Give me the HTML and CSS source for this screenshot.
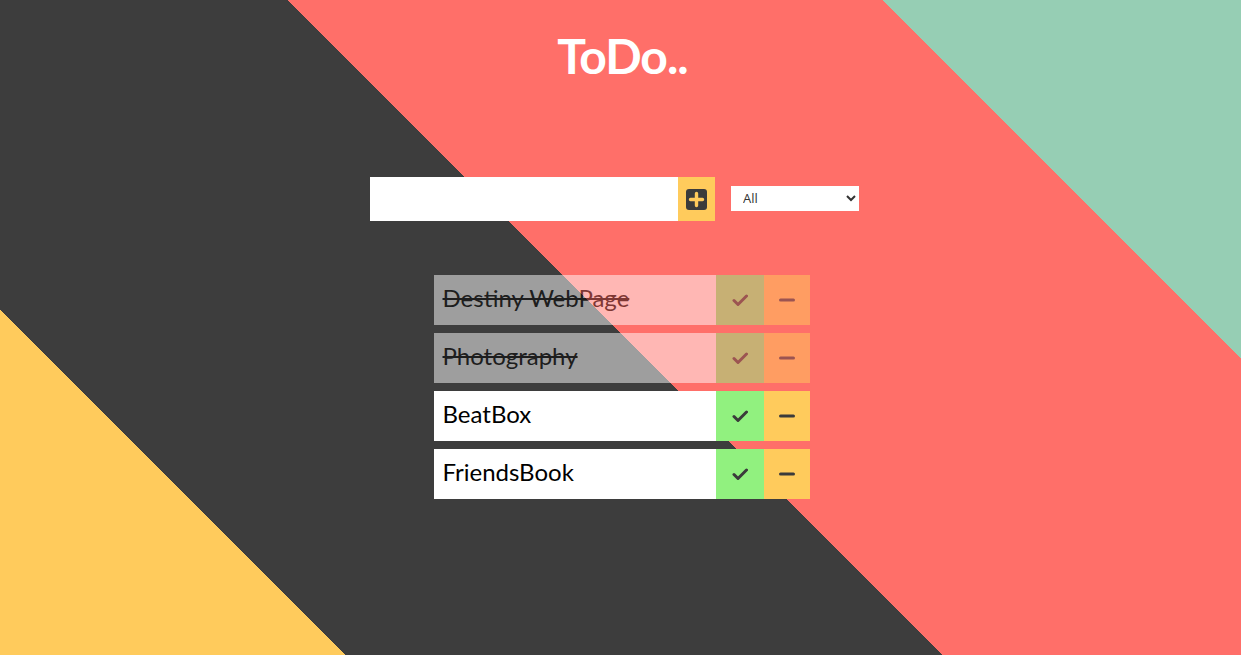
FILE: index.html
```html
<!DOCTYPE html>
<html lang="en">
<head>
<meta charset="utf-8">
<title>ToDo</title>
<link rel="stylesheet" href="styles.css">
</head>
<body>
<div class="page">
  <header class="header">
    <h1 class="title">ToDo..</h1>
  </header>
  <form class="todo-form" onsubmit="return false">
    <input class="todo-input" type="text">
    <button class="add-btn" type="button" aria-label="Add">
      <svg width="21" height="21" viewBox="0 0 21 21"><rect x="0" y="0" width="21" height="21" rx="3" fill="#3b3b3b"/><path d="M10.5 4.5v12M4.5 10.5h12" stroke="#ffcb5c" stroke-width="3.4" stroke-linecap="round"/></svg>
    </button>
    <select class="filter" name="todos">
      <option>All</option>
      <option>Completed</option>
      <option>Uncompleted</option>
    </select>
  </form>
  <ul class="todo-list">
    <li class="todo completed">
      <span class="todo-text">Destiny WebPage</span>
      <button class="check-btn" type="button"><svg width="16" height="14" viewBox="0 0 16 14"><path d="M2 7.5l4 4L14.5 3" fill="none" stroke="#3b3b3b" stroke-width="3" stroke-linecap="round" stroke-linejoin="round"/></svg></button>
      <button class="trash-btn" type="button"><svg width="16" height="4" viewBox="0 0 16 4"><path d="M1.5 2h13" stroke="#3b3b3b" stroke-width="3" stroke-linecap="round"/></svg></button>
    </li>
    <li class="todo completed">
      <span class="todo-text">Photography</span>
      <button class="check-btn" type="button"><svg width="16" height="14" viewBox="0 0 16 14"><path d="M2 7.5l4 4L14.5 3" fill="none" stroke="#3b3b3b" stroke-width="3" stroke-linecap="round" stroke-linejoin="round"/></svg></button>
      <button class="trash-btn" type="button"><svg width="16" height="4" viewBox="0 0 16 4"><path d="M1.5 2h13" stroke="#3b3b3b" stroke-width="3" stroke-linecap="round"/></svg></button>
    </li>
    <li class="todo">
      <span class="todo-text">BeatBox</span>
      <button class="check-btn" type="button"><svg width="16" height="14" viewBox="0 0 16 14"><path d="M2 7.5l4 4L14.5 3" fill="none" stroke="#3b3b3b" stroke-width="3" stroke-linecap="round" stroke-linejoin="round"/></svg></button>
      <button class="trash-btn" type="button"><svg width="16" height="4" viewBox="0 0 16 4"><path d="M1.5 2h13" stroke="#3b3b3b" stroke-width="3" stroke-linecap="round"/></svg></button>
    </li>
    <li class="todo">
      <span class="todo-text">FriendsBook</span>
      <button class="check-btn" type="button"><svg width="16" height="14" viewBox="0 0 16 14"><path d="M2 7.5l4 4L14.5 3" fill="none" stroke="#3b3b3b" stroke-width="3" stroke-linecap="round" stroke-linejoin="round"/></svg></button>
      <button class="trash-btn" type="button"><svg width="16" height="4" viewBox="0 0 16 4"><path d="M1.5 2h13" stroke="#3b3b3b" stroke-width="3" stroke-linecap="round"/></svg></button>
    </li>
  </ul>
</div>
</body>
</html>
```

FILE: styles.css
```css
* {
  margin: 0;
  padding: 0;
  box-sizing: border-box;
}

html, body {
  height: 100%;
}

body {
  font-family: "Lato", "Open Sans", sans-serif;
  color: #000;
  overflow: hidden;
}

.page {
  height: 100vh;
  width: 100%;
  background: linear-gradient(45deg,
    #ffcb5c 0%, #ffcb5c 18.2%,
    #3d3d3d 18.2%, #3d3d3d 49.7%,
    #ff6f69 49.7%, #ff6f69 81.1%,
    #96ceb4 81.1%, #96ceb4 100%);
}

.header {
  display: flex;
  justify-content: center;
  padding-top: 25px;
  padding-left: 4px;
}

.title {
  color: #fff;
  font-size: 48px;
  font-weight: 700;
  line-height: 62px;
  letter-spacing: -1px;
}

.todo-form {
  display: flex;
  justify-content: center;
  align-items: center;
  margin-top: 90px;
  padding-right: 12px;
}

.todo-input {
  width: 308px;
  height: 44px;
  border: none;
  outline: none;
  background: #fff;
  font-family: inherit;
  font-size: 20px;
  padding: 0 8px;
}

.add-btn {
  width: 37px;
  height: 44px;
  border: none;
  background: #ffcb5c;
  display: flex;
  align-items: center;
  justify-content: center;
  cursor: pointer;
}

.add-btn svg {
  display: block;
}

.filter {
  margin-left: 16px;
  margin-bottom: 2px;
  width: 128px;
  height: 25px;
  border: none;
  outline: none;
  background: #fff;
  color: #333;
  font-family: "Open Sans", "Liberation Sans", sans-serif;
  font-size: 13px;
  padding-left: 8px;
}

.todo-list {
  list-style: none;
  width: 376px;
  margin: 54px auto 0;
  position: relative;
  left: 1px;
  display: flex;
  flex-direction: column;
  gap: 8px;
}

.todo {
  display: flex;
  height: 50px;
  align-items: stretch;
}

.todo.completed {
  opacity: 0.5;
}

.todo-text {
  flex: 1;
  background: #fff;
  display: flex;
  align-items: center;
  padding-left: 9px;
  padding-bottom: 5px;
  font-size: 24px;
}

.todo.completed .todo-text {
  text-decoration: line-through;
}

.check-btn,
.trash-btn {
  border: none;
  display: flex;
  align-items: center;
  justify-content: center;
  cursor: pointer;
}

.check-btn {
  width: 48px;
  background: #91f17f;
}

.trash-btn {
  width: 46px;
  background: #ffcb5c;
}

.check-btn svg,
.trash-btn svg {
  display: block;
}
```
